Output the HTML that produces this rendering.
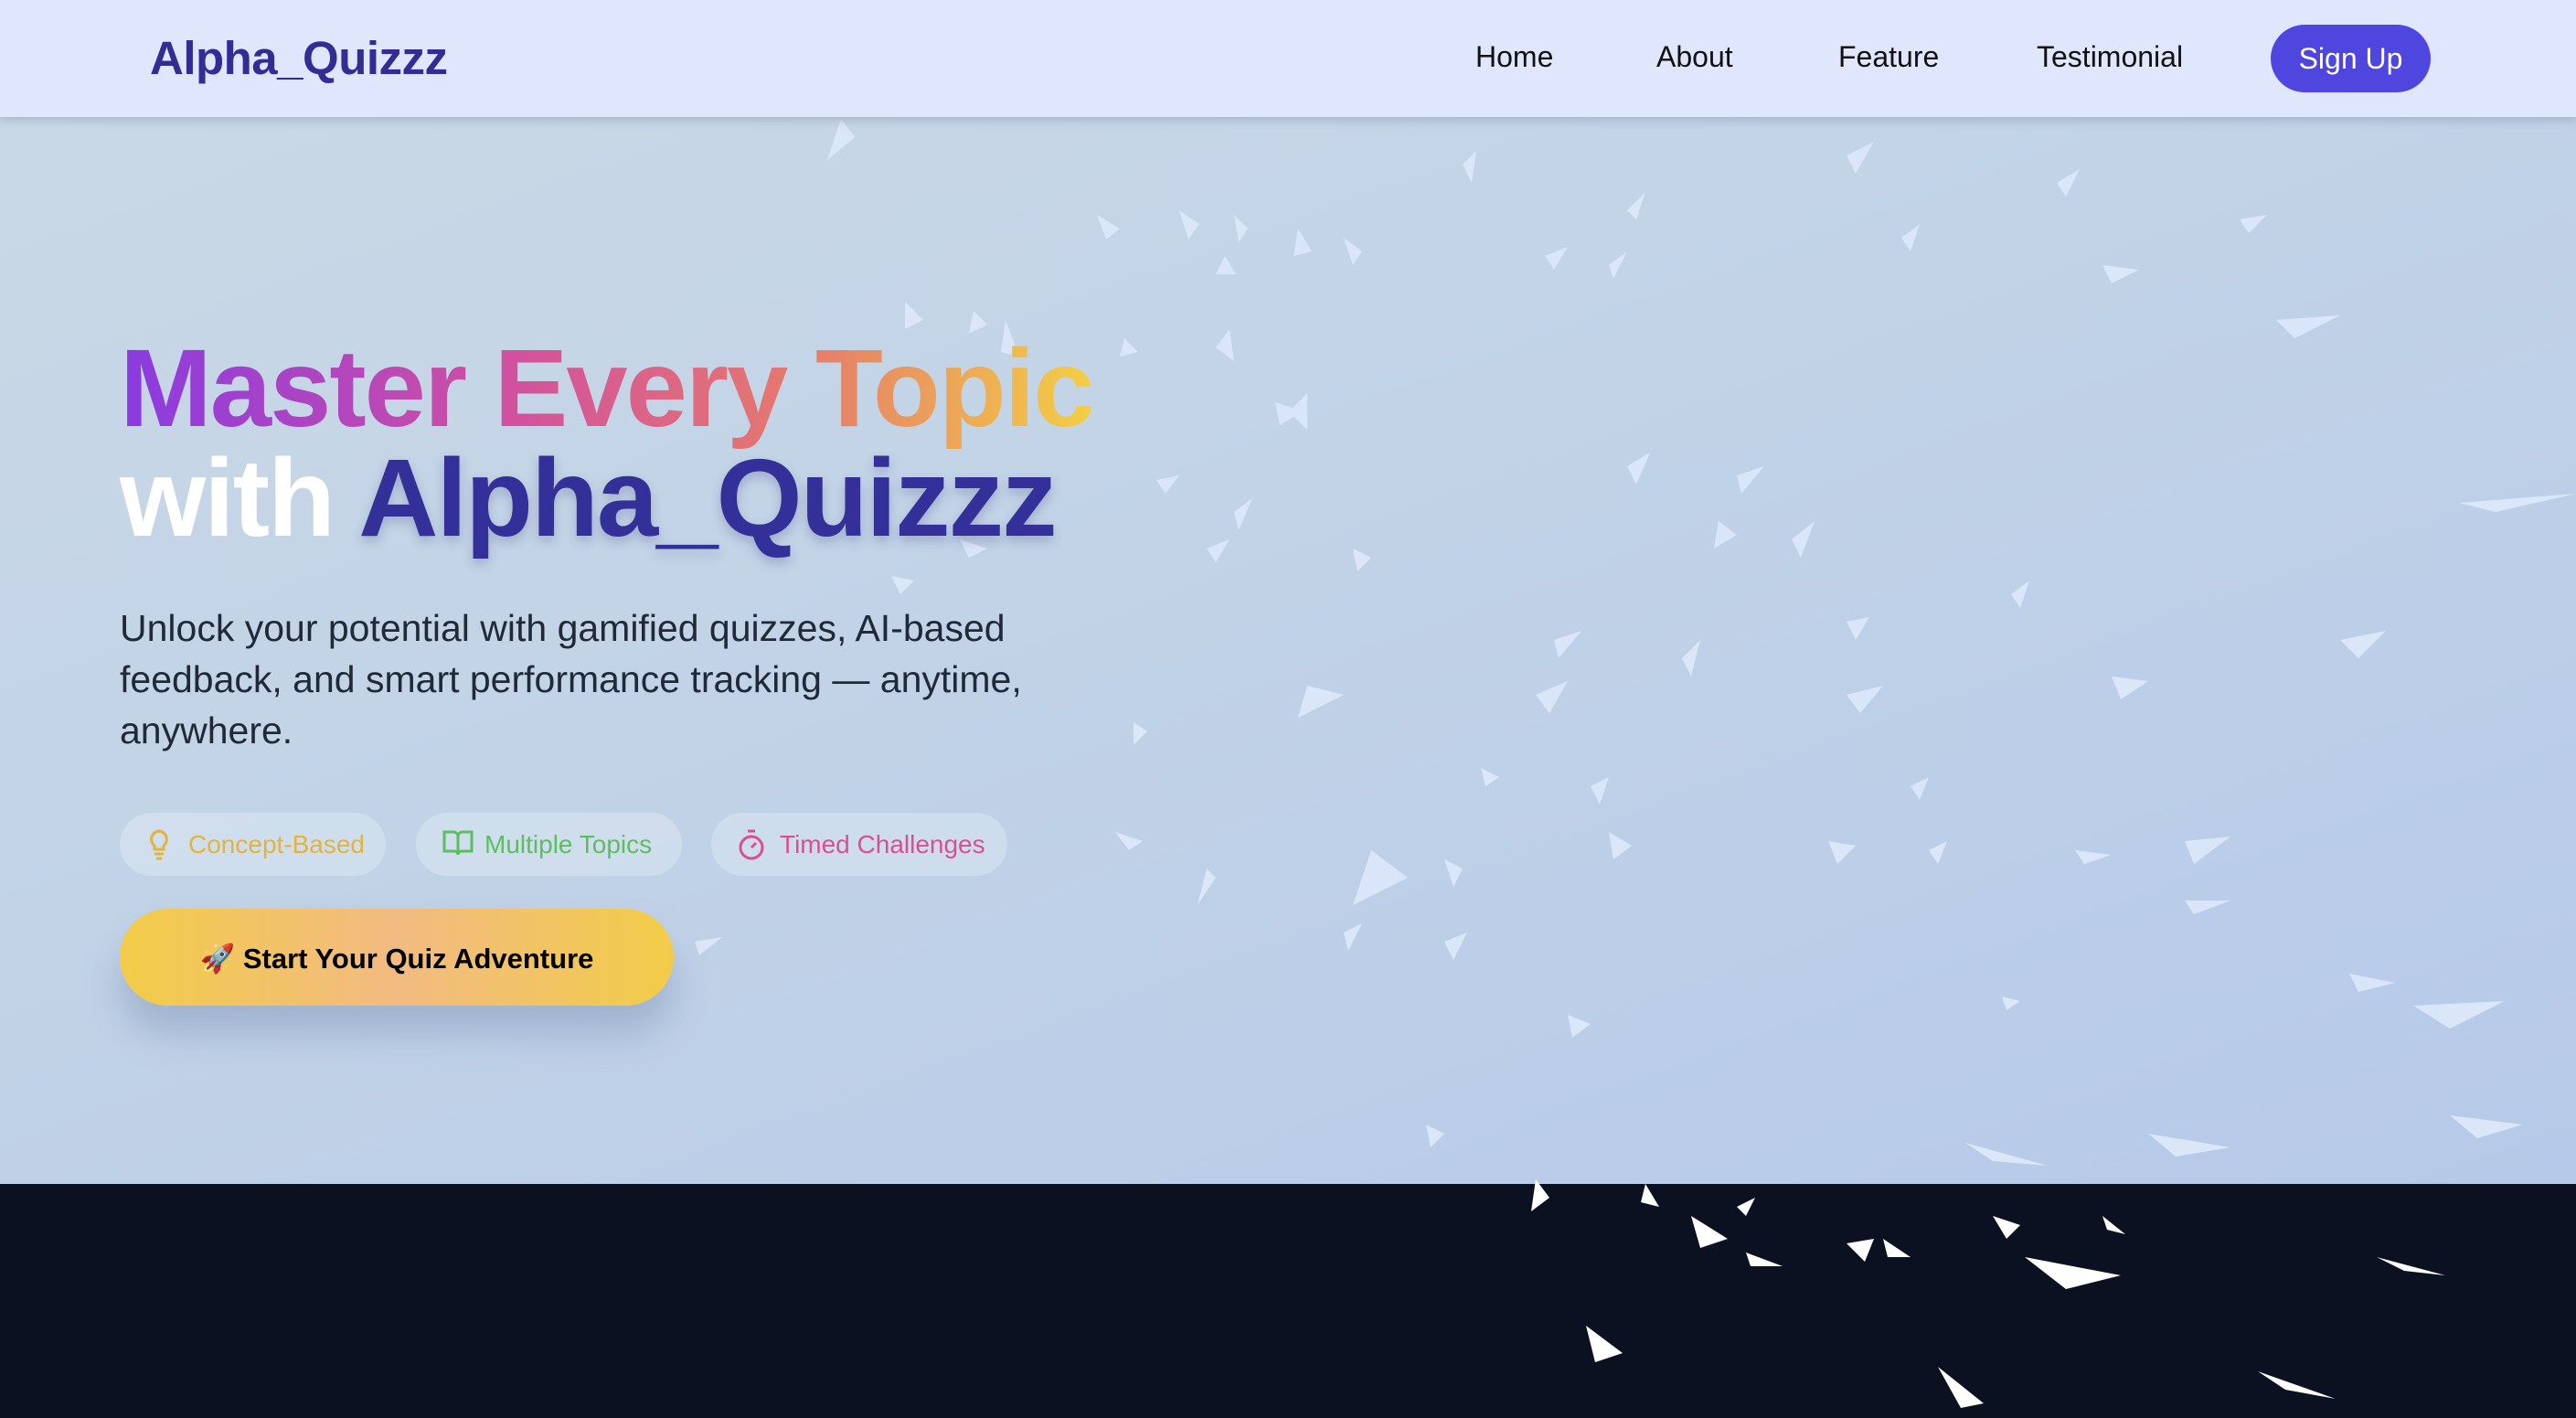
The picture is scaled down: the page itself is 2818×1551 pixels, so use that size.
<!DOCTYPE html>
<html><head><meta charset="utf-8"><style>
*{margin:0;padding:0;box-sizing:border-box}
html,body{width:2818px;height:1551px;overflow:hidden;font-family:"Liberation Sans",sans-serif}
.hero{position:absolute;left:0;top:0;width:2818px;height:1295px;background:linear-gradient(160deg,#cad9e6 0%,#c2d3e7 45%,#b6c9e8 100%)}
.dark{position:absolute;left:0;top:1295px;width:2818px;height:256px;background:#0b1120}
nav{position:absolute;left:0;top:0;width:2818px;height:128px;background:#e0e7fd;box-shadow:0 3px 10px rgba(60,70,100,.25);z-index:5}
.logo{position:absolute;left:164px;top:34px;font-size:51px;font-weight:bold;color:#322d95;letter-spacing:-0.5px}
.links a{position:absolute;top:44px;font-size:32px;color:#111;text-decoration:none}
.btn{position:absolute;left:2484px;top:27px;width:175px;height:74px;border-radius:37px;background:#4f46e0;color:#fff;font-size:32px;text-align:center;line-height:74px}
svg.birds{position:absolute;left:0;top:0;z-index:1}
h1{position:absolute;left:131px;top:364px;font-size:121px;line-height:120px;font-weight:900;letter-spacing:-2px;z-index:3;white-space:nowrap}
.g{background:linear-gradient(90deg,#8a3ae2 0%,#d2509f 40%,#e57a6c 70%,#f3cf44 100%);-webkit-background-clip:text;background-clip:text;color:transparent}
.w{color:#fff}.n{color:#34309a;text-shadow:0 6px 12px rgba(50,50,120,.25)}
p.sub{position:absolute;left:131px;top:659px;width:1140px;font-size:41px;line-height:56px;color:#1f2937;z-index:3}
.pill{position:absolute;top:889px;height:69px;border-radius:35px;background:rgba(225,235,245,.45);font-size:28px;line-height:69px;z-index:3;padding-left:75px}
.pill svg{position:absolute;left:28px;top:17px}
.cta{position:absolute;left:131px;top:994px;width:606px;height:106px;border-radius:53px;background:linear-gradient(90deg,#f2cc48,#f2bb82 50%,#f2cc48);box-shadow:0 30px 40px rgba(100,120,160,.35);font-size:31px;font-weight:bold;color:#000;text-align:center;line-height:110px;z-index:3}
</style></head><body>
<div class="hero"></div>
<div class="dark"></div>
<svg class="birds" width="2818" height="1551" viewBox="0 0 2818 1551">
<g fill="#dbe8fa" opacity=".95">
<polygon points="920,130 935,150 905,175"/>
<polygon points="1200,235 1225,250 1210,262"/>
<polygon points="1290,230 1312,245 1300,262"/>
<polygon points="1340,280 1352,300 1330,300"/>
<polygon points="1420,250 1435,275 1415,280"/>
<polygon points="1350,235 1365,250 1355,265"/>
<polygon points="990,330 1010,350 990,360"/>
<polygon points="1065,340 1080,355 1060,365"/>
<polygon points="1100,350 1115,390 1095,385"/>
<polygon points="1230,370 1245,385 1225,390"/>
<polygon points="1330,380 1345,360 1350,395"/>
<polygon points="1395,440 1425,450 1400,465"/>
<polygon points="1410,450 1430,430 1430,470"/>
<polygon points="1470,260 1490,275 1480,290"/>
<polygon points="1600,180 1615,165 1610,200"/>
<polygon points="1690,280 1715,270 1700,295"/>
<polygon points="1760,290 1780,275 1765,305"/>
<polygon points="1780,230 1800,210 1790,240"/>
<polygon points="2020,170 2050,155 2030,190"/>
<polygon points="2250,200 2275,185 2260,215"/>
<polygon points="2300,290 2340,295 2310,310"/>
<polygon points="2450,240 2480,235 2460,255"/>
<polygon points="2490,350 2560,345 2510,370"/>
<polygon points="2690,550 2818,540 2730,560"/>
<polygon points="1780,510 1805,495 1790,530"/>
<polygon points="1880,570 1900,585 1875,600"/>
<polygon points="1900,520 1930,510 1905,540"/>
<polygon points="1960,590 1985,570 1970,610"/>
<polygon points="1350,560 1370,545 1355,580"/>
<polygon points="1265,525 1290,520 1275,540"/>
<polygon points="1320,600 1345,590 1330,615"/>
<polygon points="1480,600 1500,610 1485,625"/>
<polygon points="1430,750 1470,760 1420,785"/>
<polygon points="1700,700 1730,690 1705,720"/>
<polygon points="1680,760 1715,745 1695,780"/>
<polygon points="1840,720 1860,700 1850,740"/>
<polygon points="2020,680 2045,675 2030,700"/>
<polygon points="2200,650 2220,635 2210,665"/>
<polygon points="2310,740 2350,745 2320,765"/>
<polygon points="2560,700 2610,690 2580,720"/>
<polygon points="2020,760 2060,750 2035,780"/>
<polygon points="1240,790 1255,800 1240,815"/>
<polygon points="1620,840 1640,850 1625,860"/>
<polygon points="1740,860 1760,850 1750,880"/>
<polygon points="2090,860 2110,850 2100,875"/>
<polygon points="1500,930 1540,960 1480,990"/>
<polygon points="1580,940 1600,950 1590,970"/>
<polygon points="1220,910 1250,920 1235,930"/>
<polygon points="1760,910 1785,925 1765,940"/>
<polygon points="2000,920 2030,925 2010,945"/>
<polygon points="2110,930 2130,920 2120,945"/>
<polygon points="2270,930 2310,935 2280,945"/>
<polygon points="2390,920 2440,915 2400,945"/>
<polygon points="2390,985 2440,985 2400,1000"/>
<polygon points="1470,1020 1490,1010 1475,1040"/>
<polygon points="1580,1030 1605,1020 1590,1050"/>
<polygon points="2190,1090 2210,1095 2195,1105"/>
<polygon points="2570,1065 2620,1075 2580,1085"/>
<polygon points="2640,1100 2740,1095 2680,1125"/>
<polygon points="1715,1110 1740,1120 1720,1135"/>
<polygon points="1560,1230 1580,1240 1565,1255"/>
<polygon points="2150,1250 2240,1275 2180,1270"/>
<polygon points="2350,1240 2440,1255 2380,1265"/>
<polygon points="2680,1220 2760,1230 2710,1245"/>
<polygon points="760,1030 790,1025 765,1045"/>
<polygon points="975,630 1000,635 985,650"/>
<polygon points="1320,950 1330,960 1310,990"/>
<polygon points="1050,590 1080,600 1060,610"/>
<polygon points="2080,260 2100,245 2090,275"/>
</g>
<g fill="#fff">
<polygon points="1680,1290 1695,1310 1675,1325"/>
<polygon points="1800,1295 1815,1320 1795,1315"/>
<polygon points="1850,1330 1890,1355 1860,1365"/>
<polygon points="1910,1370 1950,1385 1915,1385"/>
<polygon points="1900,1320 1920,1310 1910,1330"/>
<polygon points="2020,1360 2050,1355 2040,1380"/>
<polygon points="2060,1355 2090,1375 2065,1375"/>
<polygon points="2180,1330 2210,1340 2195,1355"/>
<polygon points="2215,1375 2320,1395 2260,1410"/>
<polygon points="2300,1330 2325,1350 2305,1345"/>
<polygon points="2600,1375 2675,1395 2630,1390"/>
<polygon points="1735,1450 1775,1480 1745,1490"/>
<polygon points="2120,1495 2170,1535 2145,1540"/>
<polygon points="2470,1500 2555,1530 2500,1520"/>
</g>
</svg>
<nav><div class="logo">Alpha_Quizzz</div>
<div class="links"><a style="left:1614px">Home</a><a style="left:1812px">About</a><a style="left:2011px">Feature</a><a style="left:2228px">Testimonial</a></div>
<div class="btn">Sign Up</div></nav>
<h1><span class="g">Master Every Topic</span><br><span class="w">with </span><span class="n">Alpha_Quizzz</span></h1>
<p class="sub">Unlock your potential with gamified quizzes, AI-based feedback, and smart performance tracking — anytime, anywhere.</p>
<div class="pill" style="left:131px;width:291px;color:#e3b43d"><svg width="30" height="36" viewBox="0 0 30 36" fill="none" stroke="#e3b43d" stroke-width="3"><path d="M15 3a9 9 0 0 0-5 16v4h10v-4a9 9 0 0 0-5-16zM10 28h10M12 33h6"/></svg>Concept-Based</div>
<div class="pill" style="left:455px;width:291px;color:#5bbf5f"><svg width="36" height="32" viewBox="0 0 36 32" fill="none" stroke="#5bbf5f" stroke-width="3"><path d="M3 4h10a5 5 0 0 1 5 5v20a4 4 0 0 0-4-4H3zM33 4H23a5 5 0 0 0-5 5v20a4 4 0 0 1 4-4h11z"/></svg>Multiple Topics</div>
<div class="pill" style="left:778px;width:324px;color:#db4f91"><svg width="32" height="36" viewBox="0 0 32 36" fill="none" stroke="#db4f91" stroke-width="3"><path d="M12 3h8M16 21l5-5"/><circle cx="16" cy="21" r="12"/></svg>Timed Challenges</div>
<div class="cta">🚀 Start Your Quiz Adventure</div>
</body></html>
